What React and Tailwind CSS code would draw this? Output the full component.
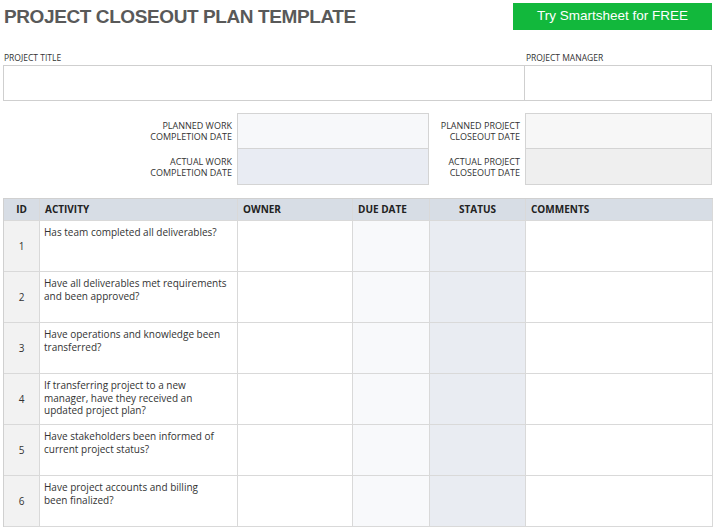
const ROWS = [
  { id: 1, lines: ['Has team completed all deliverables?'] },
  { id: 2, lines: ['Have all deliverables met requirements', 'and been approved?'] },
  { id: 3, lines: ['Have operations and knowledge been', 'transferred?'] },
  { id: 4, lines: ['If transferring project to a new', 'manager, have they received an', 'updated project plan?'] },
  { id: 5, lines: ['Have stakeholders been informed of', 'current project status?'] },
  { id: 6, lines: ['Have project accounts and billing', 'been finalized?'] },
]

const COLS = 'grid grid-cols-[36px_198px_115px_77px_96px_187px]'
const cell = 'border-r border-b border-[#d9d9d9]'

export default function App() {
  return (
    <div className="w-[716px] h-[530px] bg-white px-[3px] font-['Open_Sans',sans-serif] text-[#333]">
      <div className="flex justify-between h-[34px]">
        <h1 className="pt-[4px] pl-px text-[19px] leading-[26px] font-bold text-[#595959] font-['Liberation_Sans',sans-serif] tracking-[-0.4px]">
          PROJECT CLOSEOUT PLAN TEMPLATE
        </h1>
        <button className="mt-[3px] mr-px w-[199px] h-[27px] bg-[#12b83c] text-white text-[13.5px] font-['Liberation_Sans',sans-serif]">
          Try Smartsheet for FREE
        </button>
      </div>

      <div className="grid grid-cols-[522px_187px] mt-[17px]">
        <div className="text-[8.5px] leading-[14px] pl-px uppercase">Project Title</div>
        <div className="text-[8.5px] leading-[14px] pl-px uppercase">Project Manager</div>
        <div className="h-[36px] border border-[#cfcfcf]" />
        <div className="h-[36px] border border-l-0 border-[#cfcfcf]" />
      </div>

      <div className="grid grid-cols-[234px_192px_96px_187px] mt-[12px] text-[9px] leading-[11.5px] uppercase">
        <div className="h-[36px] flex items-center justify-end text-right pr-[5px]">
          Planned Work<br />Completion Date
        </div>
        <div className="h-[36px] border border-[#d4d4d4] bg-[#f7f8fa]" />
        <div className="h-[36px] flex items-center justify-end text-right pr-[5px]">
          Planned Project<br />Closeout Date
        </div>
        <div className="h-[36px] border border-[#d4d4d4] bg-[#f7f7f7]" />
        <div className="h-[36px] flex items-center justify-end text-right pr-[5px]">
          Actual Work<br />Completion Date
        </div>
        <div className="h-[36px] border border-t-0 border-[#d4d4d4] bg-[#e9ecf3]" />
        <div className="h-[36px] flex items-center justify-end text-right pr-[5px]">
          Actual Project<br />Closeout Date
        </div>
        <div className="h-[36px] border border-t-0 border-[#d4d4d4] bg-[#efefef]" />
      </div>

      <div className="mt-[13px] border-l border-t border-[#d0d0d0]">
        <div className={`${COLS} h-[22px] bg-[#d7dde5] text-[10px] font-bold text-[#222]`}>
          <div className={`${cell} flex items-center justify-center`}>ID</div>
          <div className={`${cell} flex items-center pl-[5px]`}>ACTIVITY</div>
          <div className={`${cell} flex items-center pl-[5px]`}>OWNER</div>
          <div className={`${cell} flex items-center pl-[5px]`}>DUE DATE</div>
          <div className={`${cell} flex items-center justify-center`}>STATUS</div>
          <div className={`${cell} flex items-center pl-[5px]`}>COMMENTS</div>
        </div>
        {ROWS.map((row) => (
          <div key={row.id} className={`${COLS} h-[51px] text-[10px]`}>
            <div className={`${cell} bg-[#f2f2f2] flex items-center justify-center`}>{row.id}</div>
            <div className={`${cell} pl-[4px] pt-[5px] leading-[12.5px] whitespace-nowrap`}>
              {row.lines.map((line) => (
                <div key={line}>{line}</div>
              ))}
            </div>
            <div className={cell} />
            <div className={`${cell} bg-[#f8f9fb]`} />
            <div className={`${cell} bg-[#e9ecf2]`} />
            <div className={cell} />
          </div>
        ))}
      </div>
    </div>
  )
}
